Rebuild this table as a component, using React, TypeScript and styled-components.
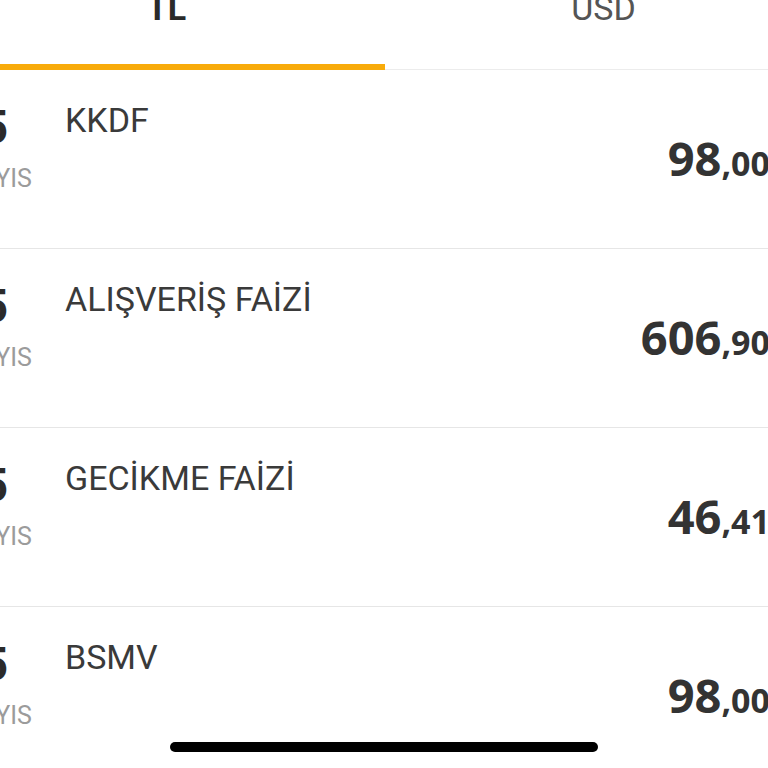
import React from "react";
import styled, { createGlobalStyle } from "styled-components";

const Global = createGlobalStyle`
  html, body { margin: 0; padding: 0; background: #ffffff; overflow: hidden; }
  body { font-family: Roboto, "Liberation Sans", sans-serif; }
`;

const Screen = styled.div`
  width: 874px;
  margin: -40px 0 0 -52px;
  background: #fff;
`;

const TabBar = styled.div`
  display: flex;
  height: 110px;
  border-bottom: 1px solid #ececec;
  box-sizing: border-box;
`;

const Tab = styled.div<{ $active?: boolean }>`
  flex: 1;
  display: flex;
  justify-content: center;
  align-items: flex-start;
  padding-top: 28px;
  box-sizing: border-box;
  font-size: 34px;
  line-height: 40px;
  font-weight: ${(p) => (p.$active ? 700 : 400)};
  color: ${(p) => (p.$active ? "#2a2a2a" : "#555")};
  border-bottom: 6px solid ${(p) => (p.$active ? "#f8ab0b" : "transparent")};
  margin-bottom: -1px;
`;

const Row = styled.div`
  display: flex;
  align-items: flex-start;
  height: 179px;
  box-sizing: border-box;
  padding-top: 30px;
  border-bottom: 1px solid #e6e6e6;
`;

const DateCol = styled.div`
  width: 94px;
  display: flex;
  flex-direction: column;
  align-items: center;
`;

const Day = styled.div`
  font-size: 46px;
  line-height: 54px;
  font-weight: 700;
  color: #2b2b2b;
`;

const Month = styled.div`
  margin-top: 10px;
  font-size: 25px;
  line-height: 29px;
  color: #9b9b9b;
`;

const Title = styled.div`
  flex: 1;
  margin-left: 23px;
  font-size: 34px;
  line-height: 40px;
  color: #3a3a3a;
`;

const Amount = styled.div`
  align-self: center;
  margin-top: -31px;
  padding-right: 52px;
  white-space: nowrap;
  color: #333;
  font-family: "Open Sans", Roboto, sans-serif;
  font-weight: 700;
`;

const Whole = styled.span`
  font-size: 47px;
  line-height: 55px;
`;

const Cents = styled.span`
  font-size: 34px;
`;

const HomeBar = styled.div`
  position: fixed;
  left: 170px;
  top: 742px;
  width: 428px;
  height: 10px;
  border-radius: 5px;
  background: #000;
`;

const rows = [
  { title: "KKDF", whole: "98", cents: "00" },
  { title: "ALIŞVERİŞ FAİZİ", whole: "606", cents: "90" },
  { title: "GECİKME FAİZİ", whole: "46", cents: "41" },
  { title: "BSMV", whole: "98", cents: "00" },
];

export default function App() {
  return (
    <>
      <Global />
      <Screen>
        <TabBar>
          <Tab $active>TL</Tab>
          <Tab>USD</Tab>
        </TabBar>
        {rows.map((r, i) => (
          <Row key={i}>
            <DateCol>
              <Day>5</Day>
              <Month>MAYIS</Month>
            </DateCol>
            <Title>{r.title}</Title>
            <Amount>
              <Whole>{r.whole}</Whole>
              <Cents>,{r.cents}</Cents>
            </Amount>
          </Row>
        ))}
      </Screen>
      <HomeBar />
    </>
  );
}
